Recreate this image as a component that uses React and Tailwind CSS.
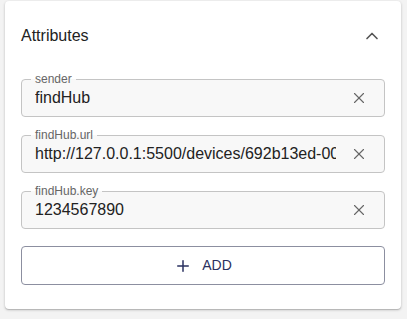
import { ChevronUp, X, Plus } from 'lucide-react';

const fields = [
  { label: 'sender', value: 'findHub' },
  { label: 'findHub.url', value: 'http://127.0.0.1:5500/devices/692b13ed-0000-4000-8000-000000000000' },
  { label: 'findHub.key', value: '1234567890' },
];

function Field({ label, value }) {
  return (
    <div className="relative h-[38px] rounded border border-[#c4c4c4] bg-[#f8f8f8] flex items-center pl-[13px] pr-[16px]">
      <span className="absolute -top-[8px] left-[9px] px-[4px] text-[12px] leading-[14px] text-[#666] bg-[linear-gradient(to_bottom,#ffffff_50%,#f8f8f8_50%)]">
        {label}
      </span>
      <div className="flex-1 overflow-hidden whitespace-nowrap text-[16px] text-[#222] mr-[14px]">{value}</div>
      <X size={18} strokeWidth={1.5} className="text-[#666] shrink-0" />
    </div>
  );
}

export default function App() {
  return (
    <div className="min-h-screen bg-[#f3f3f3] pl-[5px] pt-[1px]" style={{ fontFamily: '"Liberation Sans", Arial, sans-serif' }}>
      <div className="w-[396px] bg-white rounded shadow-[0_1px_3px_rgba(0,0,0,0.2),0_1px_1px_rgba(0,0,0,0.14)] pb-[24px]">
        <div className="h-[69px] px-4 flex items-center justify-between">
          <span className="text-[16px] text-[#222]">Attributes</span>
          <ChevronUp size={20} strokeWidth={2} className="text-[#555] mr-[3px]" />
        </div>
        <div className="px-4 pt-[9px] flex flex-col gap-[18px]">
          {fields.map((f) => (
            <Field key={f.label} {...f} />
          ))}
        </div>
        <div className="px-4 pt-[17px]">
          <button className="w-full h-[39px] rounded border border-[#8c8fa0] flex items-center justify-center gap-[10px] text-[14px] text-[#2a3160] uppercase">
            <Plus size={18} strokeWidth={2} />
            <span>Add</span>
          </button>
        </div>
      </div>
    </div>
  );
}
